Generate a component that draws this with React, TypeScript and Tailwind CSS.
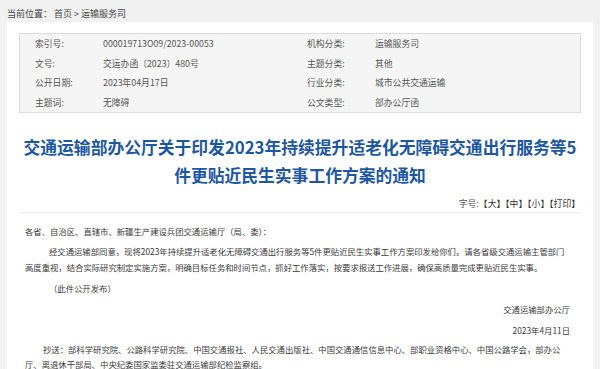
export default function App() {
  const meta = [
    ["索引号:", "000019713O09/2023-00053", "机构分类:", "运输服务司"],
    ["文号:", "交运办函〔2023〕480号", "主题分类:", "其他"],
    ["公开日期:", "2023年04月17日", "行业分类:", "城市公共交通运输"],
    ["主题词:", "无障碍", "公文类型:", "部办公厅函"],
  ];

  return (
    <div className="min-h-screen bg-[#f1f1f1] font-['Noto_Sans_CJK_SC','Noto_Sans',sans-serif] text-[#333]">
      <div className="px-[7px] pt-[8px] h-[22px] text-[9px] leading-[12px] text-[#444]">
        当前位置：&nbsp;首页 &gt; 运输服务司
      </div>
      <div className="mx-[7px] bg-white px-[12px] pt-[11px] pb-[20px]">
        <div className="border border-[#dcdcdc] bg-[#f5f5f5] text-[8.8px] text-[#555]">
          {meta.map((r) => (
            <div key={r[0]} className="flex h-[19.5px] items-center">
              <div className="w-[287px] flex pl-[15px]">
                <span className="w-[68px]">{r[0]}</span>
                <span>{r[1]}</span>
              </div>
              <div className="flex">
                <span className="w-[68px]">{r[2]}</span>
                <span>{r[3]}</span>
              </div>
            </div>
          ))}
        </div>

        <h1 className="mt-[20px] text-center text-[16.8px] leading-[28px] font-bold text-[#1d57a3]">
          交通运输部办公厅关于印发2023年持续提升适老化无障碍交通出行服务等5件更贴近民生实事工作方案的通知
        </h1>

        <div className="mt-[9px] pb-[2px] border-b border-[#ececec] text-right pr-[1px] text-[8.8px] leading-[12px] text-[#555]">
          字号:<span className="text-[#333]">【大】【中】【小】【打印】</span>
        </div>

        <div className="mt-[10px] pl-[6px] pr-[11px] text-[8.35px] leading-[16px] text-[#3a3a3a]">
          <p className="mb-[4px]">各省、自治区、直辖市、新疆生产建设兵团交通运输厅（局、委）：</p>
          <p className="mb-[5px] indent-[24px]">
            经交通运输部同意，现将2023年持续提升适老化无障碍交通出行服务等5件更贴近民生实事工作方案印发给你们。请各省级交通运输主管部门高度重视，结合实际研究制定实施方案，明确目标任务和时间节点，抓好工作落实，按要求报送工作进展，确保高质量完成更贴近民生实事。
          </p>
          <p className="mb-[5px] indent-[24px]">（此件公开发布）</p>
          <p className="mb-[5px] text-right">交通运输部办公厅</p>
          <p className="mb-[4px] text-right">2023年4月11日</p>
          <p className="indent-[18px] leading-[15px]">
            抄送：部科学研究院、公路科学研究院、中国交通报社、人民交通出版社、中国交通通信信息中心、部职业资格中心、中国公路学会，部办公厅、离退休干部局、中央纪委国家监委驻交通运输部纪检监察组。
          </p>
        </div>
      </div>
    </div>
  );
}
